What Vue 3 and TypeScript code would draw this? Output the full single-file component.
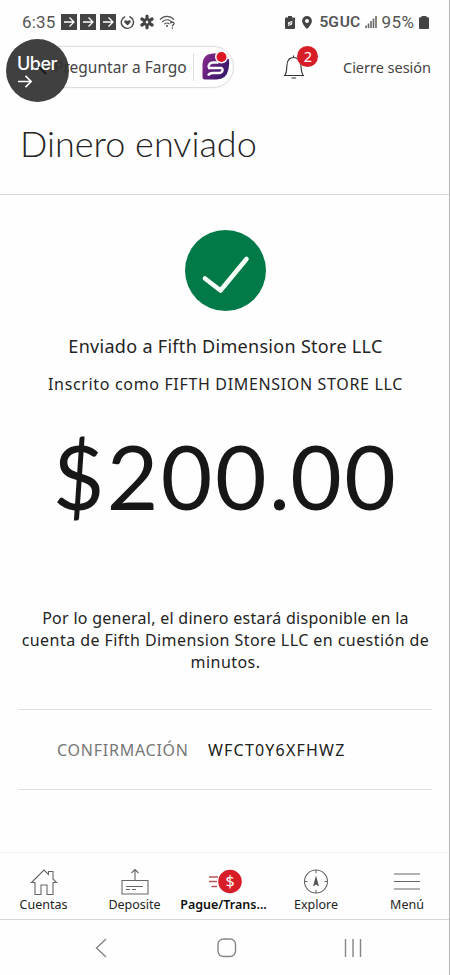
<script setup lang="ts">
interface Tab { id: string; label: string; active?: boolean }
const tabs: Tab[] = [
  { id: 'home', label: 'Cuentas' },
  { id: 'deposit', label: 'Deposite' },
  { id: 'pay', label: 'Pague/Trans...', active: true },
  { id: 'explore', label: 'Explore' },
  { id: 'menu', label: 'Menú' },
]
</script>

<template>
  <div class="screen">
    <header class="status">
      <span class="clock">6:35</span>
      <svg v-for="n in 3" :key="n" class="tile" viewBox="0 0 16 16"><rect width="16" height="16" fill="#444" /><path d="M3 8h10M8.500 3.500L13 8l-4.500 4.500" fill="none" stroke="#fff" stroke-width="1.300" /></svg>
      <svg class="heart" viewBox="0 0 16 16"><path d="M5.500 1.700A6.500 6.500 0 1 0 10 1.600M11.700 2.700A6.500 6.500 0 0 1 14.200 6" fill="none" stroke="#484848" stroke-width="1.500" /><path d="M8 11.200L4.800 8C3.600 6.500 6 4.500 8 6.500C10 4.500 12.400 6.500 11.200 8Z" fill="#484848" /></svg>
      <svg class="flower" viewBox="0 0 16 16"><g stroke="#444" stroke-width="3.200" stroke-linecap="round"><path d="M8 2.200v3M8 10.800v3M2.900 5l2.700 1.600M10.400 9.400l2.700 1.600M2.900 11l2.700-1.600M10.400 6.600L13.100 5" /></g><circle cx="8" cy="8" r="3" fill="none" stroke="#444" stroke-width="1.600" /></svg>
      <svg class="wifi" viewBox="0 0 17 16"><path d="M1 5.500C5 1.200 11 1.200 15 5.500M3.200 8C6 5 10 5 12.800 8M5.300 10.200C7 8.600 9 8.600 10.500 10.200" fill="none" stroke="#555" stroke-width="1.200" /><circle cx="8" cy="12" r="1.100" fill="#555" /><path d="M11.500 9.500c.3-2 4-1.600 3.500.4c-.3 1-1.600 1-1.600 2.500M13.400 13.500v1.300" fill="none" stroke="#444" stroke-width="1.200" /></svg>
      <span class="grow"></span>
      <svg class="saver" viewBox="0 0 10 13"><path d="M3 0h4v1.500h2q1 0 1 1V12q0 1-1 1H1q-1 0-1-1V2.500q0-1 1-1h2Z" fill="#444" /><path d="M3 6.500L7.500 4.800L7 8.500L3 10Z" fill="#fff" /><path d="M3.500 9L6.500 6" stroke="#444" stroke-width=".8" /></svg>
      <svg class="pin" viewBox="0 0 10 13"><path fill-rule="evenodd" d="M5 0a4.900 4.900 0 0 1 4.900 5C9.900 8.500 5 13 5 13S.1 8.500.1 5A4.900 4.900 0 0 1 5 0ZM5 3a2 2 0 1 0 0 4a2 2 0 0 0 0-4Z" fill="#444" /></svg>
      <b class="net">5G UC</b>
      <svg class="signal" viewBox="0 0 12 12"><path d="M1 12V9.500M3.500 12V7.500M6 12V5M8.500 12V2.500M11 12V0" stroke="#666" stroke-width="1.600" /></svg>
      <span class="percent">95%</span>
      <svg class="battery" viewBox="0 0 10 13"><path d="M2.500 0h5v1.300h1.500q1 0 1 1V12q0 1-1 1H1q-1 0-1-1V2.300q0-1 1-1h1.500Z" fill="#444" /></svg>
    </header>

    <div class="toolbar">
      <div class="search">
        <span class="prompt">Preguntar a Fargo</span>
        <i class="divider"></i>
        <svg class="fargo" viewBox="0 0 28 30">
          <defs><linearGradient id="purple" x1="0" y1="0" x2="1" y2=".6"><stop offset="0" stop-color="#8b2a8d" /><stop offset="1" stop-color="#37186b" /></linearGradient></defs>
          <path d="M12 2.500H19L27 8.500Q27.500 12 26.500 18Q24.500 28.500 14.500 28.500H2.500Q.5 28.500.5 26V14Q.5 2.500 12 2.500Z" fill="url(#purple)" />
          <path d="M6.500 16.500Q6.500 11.500 11 11.500H16.500M6 17H18.500Q21 17 20.500 19.500T17 22H11Q7.500 22 6 24.500" fill="none" stroke="#fff" stroke-width="2.400" />
          <circle cx="19.500" cy="6" r="6.500" fill="#fff" /><circle cx="19.500" cy="6" r="5" fill="#df1826" />
        </svg>
      </div>
      <div class="bell">
        <svg viewBox="0 0 22 26"><path d="M1 21.500h20M2 21.300C4 18 3.500 15 4 10.500C4.500 5.500 7 3.500 10.500 3.500S17 5.500 17.800 10.500C18.300 15 18 18 20 21.300M10.500 3.500V1.500M8.500 24h4.500" fill="none" stroke="#333" stroke-width="1.100" /></svg>
        <span class="badge">2</span>
      </div>
      <span class="logout">Cierre sesión</span>
      <div class="bubble"><span class="uber">Uber</span><svg viewBox="0 0 18 16"><path d="M1 8h14M9 2l6 6l-6 6" fill="none" stroke="#fff" stroke-width="1.700" /></svg><svg class="ghost" viewBox="0 0 10 10"><path d="M1 1l8 8" stroke="#161616" stroke-width="2" /></svg></div>
    </div>

    <div class="heading"><h1>Dinero enviado</h1></div>

    <main>
      <svg class="check" viewBox="0 0 81 81"><circle cx="40.500" cy="40.500" r="40.500" fill="#027a47" /><path d="M20 48.500L35.500 60.500L61.500 29" fill="none" stroke="#f5fff7" stroke-width="4.600" stroke-linecap="round" stroke-linejoin="round" /></svg>
      <p class="sent">Enviado a Fifth Dimension Store LLC</p>
      <p class="enrolled">Inscrito como FIFTH DIMENSION STORE LLC</p>
      <p class="amount">$200<span class="dot">.</span>00</p>
      <p class="note"><span class="l1">Por lo general, el dinero estará disponible en la</span><br /><span class="l2">cuenta de Fifth Dimension Store LLC en cuestión de</span><br /><span class="l3">minutos.</span></p>
      <div class="confirm"><span class="label">CONFIRMACIÓN</span><span class="code">WFCT0Y6XFHWZ</span></div>
    </main>

    <nav class="tabs">
      <div v-for="tab in tabs" :key="tab.id" class="tab" :class="[tab.id, { active: tab.active }]">
        <svg viewBox="0 0 36 28" fill="none" stroke="#666" stroke-width="1.100">
          <path v-if="tab.id === 'home'" d="M5.500 14.500L18 2L22.500 6.500V3.500H27V11L30.500 14.500H27V26.500H21V17H15V26.500H9V14.500Z" />
          <template v-else-if="tab.id === 'deposit'"><path d="M5 12.500H31V26H5ZM18 12V1.500M14.500 5L18 1.500L21.500 5M9 18.500H26M9 21.500H13M15 21.500H19" /></template>
          <template v-else-if="tab.id === 'pay'"><path d="M3 9H12M3 13.500H11M5.500 18.500H11" stroke="#b65359" stroke-width="1.400" /><circle cx="24" cy="13.500" r="11.800" fill="#d71e28" stroke="none" /><text x="24" y="19" text-anchor="middle" fill="#fff" stroke="none" font-size="16">$</text></template>
          <template v-else-if="tab.id === 'explore'"><circle cx="18" cy="13.500" r="11.500" /><path d="M18 2V5M18 22V25M6.500 13.500H9.500M26.500 13.500H29.500" /><path d="M18 7.500L21 18.500L18 16.500L15 18.500Z" fill="#555" stroke="none" /></template>
          <path v-else d="M5 6H31M5 13.500H31M5 21H31" />
        </svg>
        <span>{{ tab.label }}</span>
      </div>
    </nav>

    <footer class="system">
      <svg class="back" viewBox="0 0 12 20"><path d="M11 1L1.500 10L11 19" /></svg>
      <svg class="homekey" viewBox="0 0 20 20"><rect x="1" y="1" width="17.500" height="17.500" rx="5.500" /></svg>
      <svg class="recent" viewBox="0 0 18 18"><path d="M1.500 0V18M9 0V18M16.500 0V18" /></svg>
    </footer>
  </div>
</template>

<style>
body { margin: 0; background: #fff; }
</style>

<style scoped>
* { box-sizing: border-box; }
.screen { width: 450px; height: 975px; overflow: hidden; display: flex; flex-direction: column; background: #fefefe; border-right: 1px solid #b5b5b5; color: #242424; font-family: "Noto Sans", sans-serif; white-space: nowrap; }
p, h1 { margin: 0; font-weight: 400; }
svg { display: block; flex: none; }
.status { height: 44px; flex: none; display: flex; align-items: center; padding: 0 20.500px 0 22px; color: #555; font-family: Roboto, sans-serif; }
.clock { width: 38.500px; font-size: 17px; letter-spacing: .2px; }
.tile { width: 16px; height: 16px; margin-right: 3.500px; }
.heart { width: 15px; height: 15px; margin-left: 1px; }
.flower { width: 16px; height: 16px; margin-left: 4px; }
.wifi { width: 17px; height: 16px; margin-left: 4px; }
.grow { flex: 1; }
.saver { width: 10px; height: 13px; }
.pin { width: 10px; height: 13px; margin-left: 7px; }
.net { margin-left: 8px; width: 40px; font-size: 15.500px; font-weight: 600; word-spacing: -3px; }
.signal { width: 12px; height: 12px; margin-left: 5px; }
.percent { width: 35px; margin-left: 5px; font-size: 17px; letter-spacing: .4px; }
.battery { width: 10px; height: 13px; margin-left: 2px; }
.toolbar { position: relative; height: 48px; flex: none; display: flex; align-items: flex-start; padding: 2px 18px 0 20px; }
.search { width: 216px; height: 42px; border: 1px solid #dedede; border-radius: 21px; display: flex; align-items: center; padding-left: 33px; box-shadow: 0 0 2px #eee; }
.prompt { width: 134px; font-size: 15.500px; color: #444; letter-spacing: .03px; }
.divider { width: 1px; height: 28px; background: #dedede; margin-left: 5px; }
.fargo { width: 28px; height: 30px; margin-left: 8px; margin-top: -3px; }
.bell { position: relative; margin-left: 49px; width: 22px; padding-top: 8px; }
.bell svg { width: 22px; height: 26px; }
.badge { position: absolute; left: 14px; top: 0; width: 21px; height: 21px; border-radius: 50%; background: #d71e28; color: #fff; text-align: center; font-size: 14.500px; line-height: 21px; }
.logout { margin-left: 37.500px; margin-top: 10px; line-height: 22px; font-size: 14.500px; letter-spacing: -.02px; color: #444; }
.bubble { position: absolute; left: 6px; top: -5px; width: 63px; height: 63px; border-radius: 50%; background: rgba(50, 50, 50, .93); padding: 14px 0 0 11px; color: #fff; }
.uber { display: block; font-family: Inter, sans-serif; font-weight: 500; font-size: 18px; line-height: 21px; height: 21px; letter-spacing: -.5px; }
.bubble svg { width: 17px; height: 15px; }
.bubble .ghost { position: absolute; width: 9px; height: 9px; left: 32px; top: 27px; }
.heading { height: 103px; flex: none; display: flex; align-items: center; padding-left: 20px; border-bottom: 1px solid #dadada; }
h1 { font-family: Lato, sans-serif; font-size: 36px; font-weight: 300; line-height: 50px; }
main { flex: none; height: 657px; padding: 35px 17px 0 19px; display: flex; flex-direction: column; align-items: center; }
.check { width: 81px; height: 81px; }
.sent { margin-top: 22px; line-height: 26px; font-size: 18px; letter-spacing: .3px; }
.enrolled { margin-top: 12px; line-height: 26px; font-size: 16px; letter-spacing: .66px; }
.amount { margin-top: 29px; height: 100px; line-height: 100px; font-family: Lato, sans-serif; font-size: 89px; letter-spacing: 2.500px; color: #171717; }
.dot { letter-spacing: 0; }
.note { margin-top: 82px; text-align: center; font-size: 16px; line-height: 21.800px; letter-spacing: .44px; }
.l1 { letter-spacing: .27px; }
.confirm { margin-top: 36px; width: 413px; height: 81px; border-top: 1px solid #dedede; border-bottom: 1px solid #dedede; display: flex; align-items: center; padding-left: 38px; font-size: 16px; }
.label { width: 151px; color: #777; letter-spacing: .75px; }
.code { color: #202020; letter-spacing: 1.200px; }
.tabs { height: 68px; flex: none; border-top: 1px solid #f1f1f1; border-bottom: 1px solid #d6d6d6; display: grid; grid-template-columns: 87px 95px 83px 102px 80px; }
.tab { display: flex; flex-direction: column; align-items: center; padding-top: 15px; font-size: 12.500px; }
.tab svg { width: 36px; height: 28px; }
.tab span { line-height: 18px; }
.active span { font-weight: 600; color: #111; }
.system { flex: 1; display: flex; align-items: center; padding: 1px 0 0 95px; }
.system svg { fill: none; stroke: #858585; stroke-width: 1.400; }
.back { width: 12px; height: 20px; }
.homekey { width: 20px; height: 20px; margin-left: 110px; }
.recent { width: 18px; height: 18px; margin-left: 107px; }
</style>
